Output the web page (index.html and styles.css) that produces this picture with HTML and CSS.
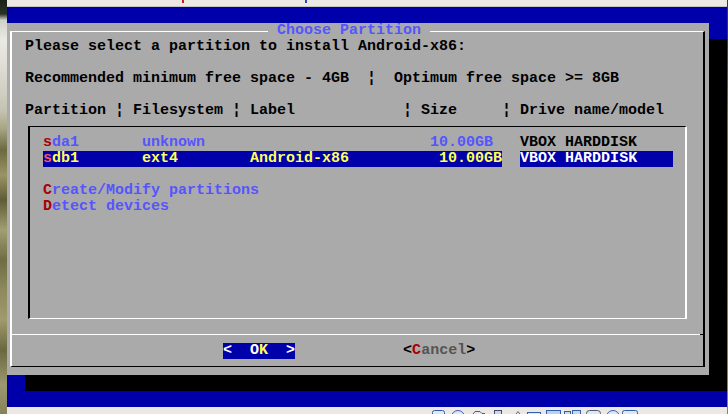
FILE: index.html
```html
<!DOCTYPE html>
<html>
<head>
<meta charset="utf-8">
<title>Choose Partition</title>
<link rel="stylesheet" href="styles.css">
</head>
<body>
<div class="window">
  <div class="wallpaper"></div>
  <div class="vm">
    <div class="menubar"><span class="mark mark-a"></span><span class="mark mark-b"></span></div>
    <div class="screen">
      <div class="scr-row"></div>
      <div class="middle">
        <div class="dialog">
          <fieldset class="frame">
            <legend class="title"> Choose Partition </legend>
            <div class="body">
              <div class="line">Please select a partition to install Android-x86:</div>
              <div class="line"></div>
              <div class="line">Recommended minimum free space - 4GB  ¦  Optimum free space &gt;= 8GB</div>
              <div class="line"></div>
              <div class="line">Partition ¦ Filesystem ¦ Label            ¦ Size     ¦ Drive name/model</div>
            </div>
            <div class="listbox-row">
              <div class="listbox">
                <div class="line"><span class="hot">s</span><span class="item">da1       unknown                         10.00GB</span>   VBOX HARDDISK</div>
                <div class="line"><span class="sel"><span class="hot-sel">s</span>db1       ext4        Android-x86          10.00GB</span>  <span class="sel sel-drive">VBOX HARDDISK    </span></div>
                <div class="line"></div>
                <div class="line"><span class="hot">C</span><span class="item">reate/Modify partitions</span></div>
                <div class="line"><span class="hot">D</span><span class="item">etect devices</span></div>
              </div>
            </div>
            <div class="separator"></div>
            <div class="buttons">
              <span class="btn btn-active">&lt;  O<span class="btn-key">K</span>  &gt;</span>
              <span class="btn">&lt;<span class="cancel-key">C</span><span class="cancel-text">ancel</span>&gt;</span>
            </div>
          </fieldset>
        </div>
        <div class="shadow-right"></div>
      </div>
      <div class="shadow-bottom"></div>
      <div class="scr-row"></div>
    </div>
    <div class="statusbar">
      <svg class="tray" width="212" height="7" viewBox="0 0 212 7">
        <rect x="0.5" y="3.5" width="12" height="10" rx="2" fill="#dfe7f4" stroke="#2f5fb3"/>
        <circle cx="26" cy="10" r="6.5" fill="#dfe7f4" stroke="#2f5fb3"/>
        <path d="M39.5 9 L43 4.5 L48 4.5 L50 6.5 L53 6.5" fill="none" stroke="#2f5fb3"/>
        <rect x="62.5" y="3.5" width="7" height="10" fill="#cfd6e2" stroke="#3a4d78"/>
        <path d="M82.5 9 L86 4.5 L89.5 9" fill="#e6e6e6" stroke="#5a6a86"/>
        <rect x="95.5" y="5.5" width="13" height="8" fill="#dfe7f4" stroke="#2f5fb3"/>
        <rect x="114.5" y="3.5" width="14" height="10" fill="#bcd0f0" stroke="#2f5fb3"/>
        <rect x="132.5" y="4.5" width="6" height="9" fill="#cfd6e2" stroke="#2f5fb3"/>
        <rect x="140.5" y="3.5" width="8" height="10" fill="#cfd6e2" stroke="#2f5fb3"/>
        <rect x="154.5" y="3.5" width="14" height="10" rx="3" fill="#dfe7f4" stroke="#4a5a78"/>
        <circle cx="181" cy="10" r="6.5" fill="#dfe7f4" stroke="#2f5fb3"/>
        <rect x="190.5" y="3.5" width="15" height="10" rx="2" fill="#dfe7f4" stroke="#2f5fb3"/>
      </svg>
    </div>
  </div>
  <div class="edge"></div>
</div>
</body>
</html>
```

FILE: styles.css
```css
* {
  box-sizing: border-box;
}

html,
body {
  margin: 0;
  padding: 0;
}

body {
  width: 728px;
  height: 414px;
  overflow: hidden;
  background: #ece9e4;
}

.window {
  display: flex;
  width: 728px;
  height: 414px;
}

.wallpaper {
  width: 7px;
  flex: none;
  background: linear-gradient(to bottom,
    #1c2219 0, #2a3226 14px, #cfd0c8 20px, #ebebe5 40px, #d6d6cc 80px,
    #c4c4b4 110px, #a8a684 128px, #6c6a40 150px, #9a9464 175px, #5e5c36 200px,
    #a29e72 230px, #706c44 260px, #8e8a5e 290px, #a09a6c 320px, #6a6840 350px,
    #9c9870 385px, #85825a 414px);
}

.edge {
  width: 1px;
  flex: none;
  background: linear-gradient(to bottom, #3a3a3a 0, #3a3a3a 40px, #6f6c48 120px, #8a8660 414px);
}

.vm {
  width: 720px;
  flex: none;
  display: flex;
  flex-direction: column;
}

.menubar {
  height: 7px;
  flex: none;
  display: flex;
  background: #ece9e4;
  border-bottom: 1px solid #c9c6c0;
}

.mark {
  width: 2px;
  height: 3px;
  background: linear-gradient(to right, #c01818 50%, #3050c0 50%);
}

.mark-a {
  margin-left: 175px;
}

.mark-b {
  margin-left: 121px;
}

.screen {
  width: 720px;
  height: 400px;
  flex: none;
  display: flex;
  flex-direction: column;
  background: #0000aa;
  font: bold 15px/16px "Liberation Mono", "DejaVu Sans Mono", monospace;
  color: #000;
}

.scr-row {
  height: 16px;
  flex: none;
}

.middle {
  height: 352px;
  flex: none;
  display: flex;
}

.dialog {
  width: 702px;
  flex: none;
  background: #aaaaaa;
}

.shadow-right {
  width: 18px;
  flex: none;
  margin-top: 16px;
  background: #000;
}

.shadow-bottom {
  height: 16px;
  flex: none;
  margin-left: 18px;
  background: #000;
}

.frame {
  margin: 0 4px 0 3px;
  padding: 0 0 7px 0;
  min-inline-size: 0;
  border-style: solid;
  border-width: 1px 2px 1px 2px;
  border-color: #ffffff #000000 #000000 #ffffff;
}

.title {
  margin-left: 256px;
  padding: 0;
  height: 16px;
  line-height: 16px;
  color: #5555ff;
  white-space: pre;
}

.body {
  padding-left: 13px;
}

.line {
  height: 16px;
  white-space: pre;
}

.listbox-row {
  height: 208px;
  padding: 7px 16px 8px 16px;
}

.listbox {
  height: 193px;
  padding: 8px 0 0 13px;
  border-style: solid;
  border-width: 1px 2px 1px 2px;
  border-color: #000000 #ffffff #ffffff #000000;
}

.hot {
  color: #aa0000;
}

.item {
  color: #5555ff;
}

.sel {
  display: inline-block;
  height: 16px;
  vertical-align: top;
  background: #0000aa;
  color: #ffff55;
}

.hot-sel {
  color: #ff5555;
}

.sel-drive {
  color: #ffffff;
}

.separator {
  height: 16px;
  background:
    linear-gradient(to right, #ffffff calc(100% - 3px), #000000 0) 0 7px / 100% 1px no-repeat;
}

.buttons {
  height: 16px;
  display: flex;
  gap: 12ch;
  padding-left: calc(13px + 22ch);
  white-space: pre;
}

.btn {
  display: inline-block;
  height: 16px;
  color: #000;
}

.btn-active {
  background: #0000aa;
  color: #ffffff;
}

.btn-key {
  color: #ffff55;
}

.cancel-key {
  color: #aa0000;
}

.cancel-text {
  color: #555555;
}

.statusbar {
  height: 7px;
  flex: none;
  overflow: hidden;
  background: #ece9e4;
}

.tray {
  display: block;
  margin-left: 425px;
}
```
